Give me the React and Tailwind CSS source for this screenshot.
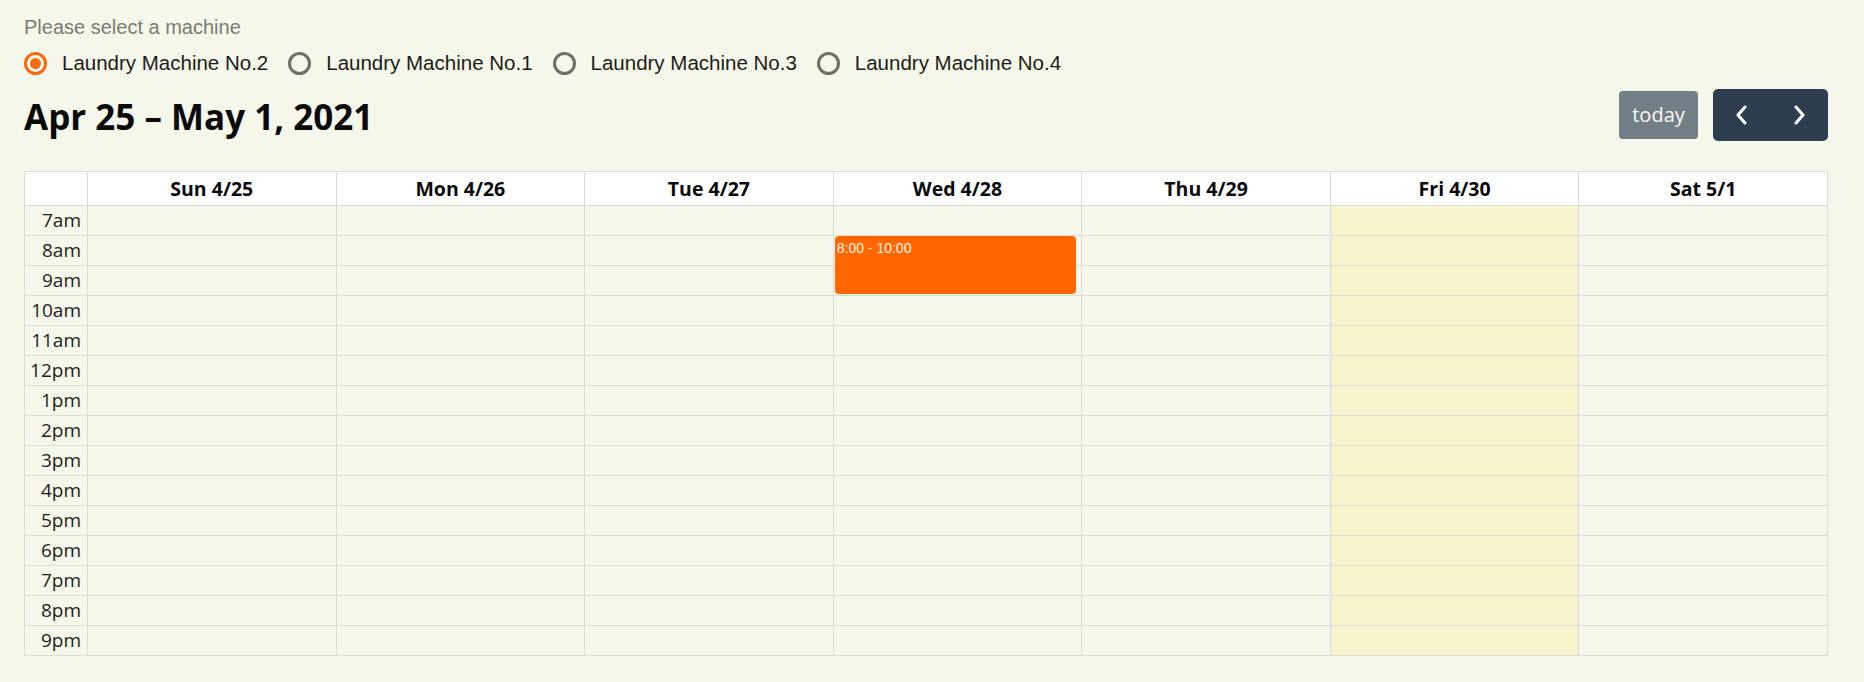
import { useState } from 'react';

// Machines shown in the selector
const machines = [
  { id: 2, name: 'Laundry Machine No.2' },
  { id: 1, name: 'Laundry Machine No.1' },
  { id: 3, name: 'Laundry Machine No.3' },
  { id: 4, name: 'Laundry Machine No.4' },
];

const days = ['Sun 4/25', 'Mon 4/26', 'Tue 4/27', 'Wed 4/28', 'Thu 4/29', 'Fri 4/30', 'Sat 5/1'];
const hours = ['7am', '8am', '9am', '10am', '11am', '12pm', '1pm', '2pm', '3pm', '4pm', '5pm', '6pm', '7pm', '8pm', '9pm'];

const TODAY_INDEX = 5;

const RadioDot = ({ checked }) => (
  <span
    className={`flex h-[23px] w-[23px] shrink-0 items-center justify-center rounded-full border-[3px] ${
      checked ? 'border-[#f66a10]' : 'border-[#6e706b]'
    }`}
  >
    {checked && <span className="h-[11px] w-[11px] rounded-full bg-[#f66a10]" />}
  </span>
);

const Chevron = ({ dir }) => (
  <svg width="12" height="20" viewBox="0 0 12 20" fill="none" stroke="currentColor" strokeWidth="3" strokeLinecap="round" strokeLinejoin="round">
    {dir === 'left' ? <polyline points="9,2 2,10 9,18" /> : <polyline points="3,2 10,10 3,18" />}
  </svg>
);

const App = () => {
  const [selected, setSelected] = useState(2);

  return (
    <div className="min-h-screen w-full bg-[#f4f7e9] pl-[24px] pr-[36px] font-['Liberation_Sans',Arial,sans-serif]">
      {/* Machine selector */}
      <div className="pt-[15px] text-[20px] leading-[24px] text-[#7a7b76]">Please select a machine</div>
      <div className="mt-[3px] flex h-[43px] items-center gap-[20px]">
        {machines.map(m => (
          <label
            key={m.id}
            onClick={() => setSelected(m.id)}
            className="flex cursor-pointer items-center gap-[15px] text-[20.5px] text-[#1c1c1c]"
          >
            <RadioDot checked={selected === m.id} />
            {m.name}
          </label>
        ))}
      </div>

      {/* Toolbar */}
      <div className="mt-[4px] mb-[30px] flex h-[52px] items-center justify-between font-['Open_Sans','Noto_Sans',sans-serif]">
        <h2 className="pt-[2px] text-[35px] font-bold leading-none text-[#0a0a0a]">Apr 25 – May 1, 2021</h2>
        <div className="flex items-center gap-[15px]">
          <button className="h-[48px] w-[79px] rounded-[4px] bg-[#2c3e50] text-[20px] text-white opacity-65">today</button>
          <div className="flex h-[52px] w-[115px] overflow-hidden rounded-[5px] bg-[#2c3e50] text-white">
            <button className="flex flex-1 items-center justify-center"><Chevron dir="left" /></button>
            <button className="flex flex-1 items-center justify-center"><Chevron dir="right" /></button>
          </div>
        </div>
      </div>

      {/* Week grid */}
      <div className="border-t border-l border-[#dcdcd6] font-['Open_Sans','Noto_Sans',sans-serif]">
        <div className="grid grid-cols-[63px_repeat(7,minmax(0,1fr))] bg-white">
          <div className="h-[34px] border-r border-b border-[#dcdcd6]" />
          {days.map(d => (
            <div key={d} className="flex h-[34px] items-center justify-center border-r border-b border-[#dcdcd6] text-[19.5px] font-bold text-[#0a0a0a]">
              {d}
            </div>
          ))}
        </div>
        <div className="grid grid-cols-[63px_repeat(7,minmax(0,1fr))]">
          <div className="flex flex-col">
            {hours.map(h => (
              <div key={h} className="flex h-[30px] items-center justify-end border-r border-b border-[#dcdcd6] pr-[6px] text-[19px] text-[#1e1e1e]">
                {h}
              </div>
            ))}
          </div>
          {days.map((d, i) => (
            <div key={d} className={`relative flex flex-col ${i === TODAY_INDEX ? 'bg-[#f7f4cd]' : ''}`}>
              {hours.map(h => (
                <div key={h} className="h-[30px] border-r border-b border-[#dcdcd6]" />
              ))}
              {i === 3 && (
                <div className="absolute top-[30px] left-[1px] right-[2.5%] h-[58px] rounded-[4px] bg-[#ff6600] pt-[4px] pl-[2px] font-['Liberation_Sans',Arial,sans-serif] text-[14px] leading-[16px] text-[#fff6e4]">
                  8:00 - 10:00
                </div>
              )}
            </div>
          ))}
        </div>
      </div>
    </div>
  );
};

export default App;
